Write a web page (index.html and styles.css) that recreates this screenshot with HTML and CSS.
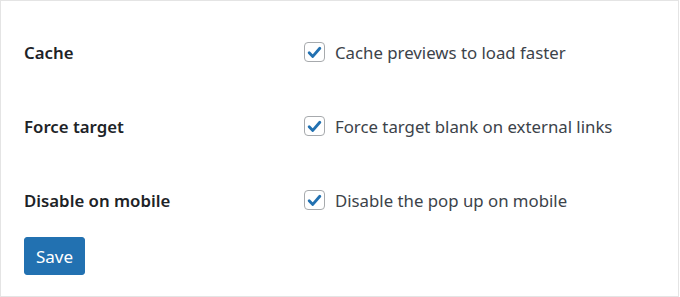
FILE: index.html
```html
<!DOCTYPE html>
<html lang="en">
<head>
    <meta charset="UTF-8">
    <meta name="viewport" content="width=device-width, initial-scale=1.0">
    <title>Link Preview Settings</title>
    <link rel="stylesheet" href="styles.css">
</head>
<body>
    <form class="panel">
        <div class="settings">
            <div class="label">Cache</div>
            <label class="field">
                <span class="checkbox">
                    <svg viewBox="0 0 20 20"><path d="M4.4 10.2l3.8 3.9 7.4-8.6" fill="none" stroke="#2271b1" stroke-width="3" stroke-linecap="round" stroke-linejoin="round"/></svg>
                </span>
                Cache previews to load faster
            </label>

            <div class="label">Force target</div>
            <label class="field">
                <span class="checkbox">
                    <svg viewBox="0 0 20 20"><path d="M4.4 10.2l3.8 3.9 7.4-8.6" fill="none" stroke="#2271b1" stroke-width="3" stroke-linecap="round" stroke-linejoin="round"/></svg>
                </span>
                Force target blank on external links
            </label>

            <div class="label">Disable on mobile</div>
            <label class="field">
                <span class="checkbox">
                    <svg viewBox="0 0 20 20"><path d="M4.4 10.2l3.8 3.9 7.4-8.6" fill="none" stroke="#2271b1" stroke-width="3" stroke-linecap="round" stroke-linejoin="round"/></svg>
                </span>
                Disable the pop up on mobile
            </label>
        </div>
        <button type="button" class="button">Save</button>
    </form>
</body>
</html>
```

FILE: styles.css
```css
body {
    margin: 0;
    background-color: #fff;
    font-family: "Noto Sans", "Open Sans", sans-serif;
}

.panel {
    box-sizing: border-box;
    width: 679px;
    height: 297px;
    border: 1px solid #e4e4e4;
    padding: 39px 23px 0;
}

.settings {
    display: grid;
    grid-template-columns: 280px 1fr;
    grid-auto-rows: 24px;
    row-gap: 50px;
    align-items: center;
}

.label {
    font-size: 16.8px;
    font-weight: 600;
    color: #1d2327;
}

.field {
    display: flex;
    align-items: center;
    gap: 10px;
    font-size: 16.8px;
    color: #3c434a;
}

.checkbox {
    box-sizing: border-box;
    width: 21px;
    height: 20px;
    border: 1px solid #a7aaad;
    border-radius: 4px;
    display: flex;
    align-items: center;
    justify-content: center;
}

.checkbox svg {
    width: 19px;
    height: 19px;
}

.button {
    margin-top: 25px;
    width: 61px;
    height: 38px;
    padding: 0;
    border: 1px solid #2271b1;
    border-radius: 3px;
    background-color: #2271b1;
    color: #fff;
    font-family: inherit;
    font-size: 17px;
    cursor: pointer;
}
```
